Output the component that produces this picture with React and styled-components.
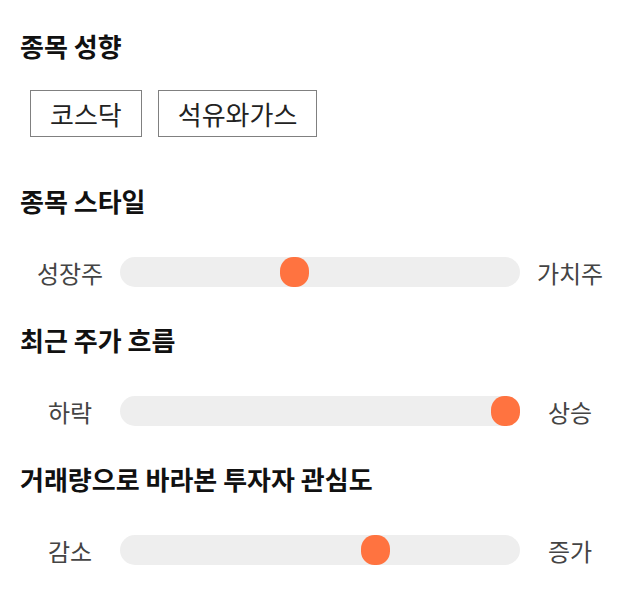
import React from 'react';
import styled, { createGlobalStyle } from 'styled-components';

const GlobalStyle = createGlobalStyle`
  body {
    margin: 0;
    background: #fff;
    font-family: "Noto Sans CJK KR", "Noto Sans", sans-serif;
  }
`;

const Page = styled.div`
  width: 640px;
  box-sizing: border-box;
  padding: 29px 20px 0;
`;

const Section = styled.section`
  margin-bottom: ${props => props.$after}px;
`;

const Title = styled.h2`
  margin: 0 0 ${props => props.$gap}px;
  font-size: 26px;
  line-height: 34px;
  font-weight: 700;
  color: #111;
`;

const TagList = styled.div`
  display: flex;
  gap: 16px;
  padding-left: 10px;
`;

const Tag = styled.button`
  display: flex;
  align-items: center;
  height: 47px;
  padding: 0 19px;
  border: 1px solid #808080;
  background: #fff;
  font-family: inherit;
  font-size: 26px;
  color: #222;
`;

const SliderRow = styled.div`
  display: flex;
  align-items: center;
  height: 30px;
`;

const SideLabel = styled.span`
  width: 100px;
  flex: none;
  text-align: center;
  font-size: 24px;
  color: #444;
`;

const Track = styled.div`
  position: relative;
  flex: 1;
  height: 30px;
  border-radius: 15px;
  background: #eeeeee;
`;

const Thumb = styled.div`
  position: absolute;
  top: 0;
  left: calc(${props => props.$value} * (100% - 29px) / 100);
  width: 29px;
  height: 30px;
  border-radius: 46%;
  background: #ff7340;
`;

const sliders = [
  { title: '종목 스타일', left: '성장주', right: '가치주', value: 43 },
  { title: '최근 주가 흐름', left: '하락', right: '상승', value: 100 },
  { title: '거래량으로 바라본 투자자 관심도', left: '감소', right: '증가', value: 65 },
];

export default function App() {
  return (
    <Page>
      <GlobalStyle />
      <Section $after={47}>
        <Title $gap={27}>종목 성향</Title>
        <TagList>
          <Tag>코스닥</Tag>
          <Tag>석유와가스</Tag>
        </TagList>
      </Section>
      {sliders.map(s => (
        <Section key={s.title} $after={36}>
          <Title $gap={39}>{s.title}</Title>
          <SliderRow>
            <SideLabel>{s.left}</SideLabel>
            <Track>
              <Thumb $value={s.value} />
            </Track>
            <SideLabel>{s.right}</SideLabel>
          </SliderRow>
        </Section>
      ))}
    </Page>
  );
}
